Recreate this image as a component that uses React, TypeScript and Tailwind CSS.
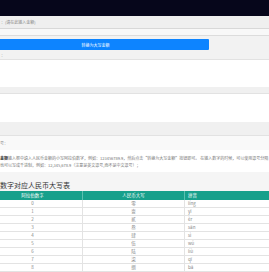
const rows = [
  { n: '0', c: '零', p: 'líng' },
  { n: '1', c: '壹', p: 'yī' },
  { n: '2', c: '贰', p: 'èr' },
  { n: '3', c: '叁', p: 'sān' },
  { n: '4', c: '肆', p: 'sì' },
  { n: '5', c: '伍', p: 'wǔ' },
  { n: '6', c: '陆', p: 'liù' },
  { n: '7', c: '柒', p: 'qī' },
  { n: '8', c: '捌', p: 'bā' },
];

const font = { fontFamily: '"Noto Sans CJK SC", "Noto Sans", sans-serif' };

export default function App() {
  return (
    <div className="w-[269px] h-[272px] overflow-hidden bg-[#f5f5f5] text-[#888]" style={font}>
      <div className="h-[16px] bg-[#06061b]" />

      <div className="h-[13px] bg-[#efefef] border-b border-[#d8d8d8] flex items-center pl-[1px] text-[4px] leading-none">
        ：(请在此输入金额)
      </div>
      <div className="h-[7px] bg-[#f8f8f8] border-b border-[#dcdcdc]" />

      <div className="h-[24px] bg-[#f2f2f2] border-b border-[#e2e2e2] flex flex-col">
        <button className="mt-[3px] h-[11px] -ml-[18px] w-[227px] bg-[#0d84ff] rounded-[1px] text-white text-[4px] leading-none flex items-center justify-center">
          转换为大写金额
        </button>
        <div className="mt-[3px] pl-[1px] text-[4px] leading-none">：</div>
      </div>

      <div className="h-[27px] bg-white" />
      <div className="h-[7px] bg-[#f0f0f0] border-b border-[#e2e2e2]" />
      <div className="h-[28px] bg-white" />
      <div className="h-[14px] bg-[#f0f0f0] border-b border-[#e2e2e2]" />

      <div className="h-[14px] bg-[#f9f9f9] flex items-center text-[4px] leading-none">号：</div>

      <div className="h-[22px] bg-white flex flex-col justify-center gap-[3px] whitespace-nowrap text-[4px] leading-none text-[#777]">
        <div>
          <span className="font-bold text-[#333]">金额</span>
          输入框中填入人民币金额的小写阿拉伯数字，例如：123456789.9，然后点击“转换为大写金额”按钮即可。 在输入数字的时候，可以使用逗号分隔
        </div>
        <div>也可以写成千进制，例如：12,345,678.9（注意是英文逗号,而不是中文逗号）；</div>
      </div>

      <div className="h-[7px]" />
      <div className="h-[12px] text-[7px] leading-none text-[#333] flex items-center whitespace-nowrap">
        数字对应人民币大写表
      </div>

      <div className="-ml-[17px] w-[290px] text-[4.5px] leading-none">
        <div className="grid grid-cols-[100px_102px_1fr] h-[9px] bg-[#17a08b] text-white">
          <div className="flex items-center justify-center border-r border-[#5cc0b0]">阿拉伯数字</div>
          <div className="flex items-center justify-center border-r border-[#5cc0b0]">人民币大写</div>
          <div className="flex items-center pl-[3px]">拼音</div>
        </div>
        {rows.map((r) => (
          <div key={r.n} className="grid grid-cols-[100px_102px_1fr] h-[8px] bg-white border-b border-[#e3e3e3] text-[#888]">
            <div className="flex items-center justify-center border-r border-[#e3e3e3]">{r.n}</div>
            <div className="flex items-center justify-center border-r border-[#e3e3e3]">{r.c}</div>
            <div className="flex items-center pl-[3px]">{r.p}</div>
          </div>
        ))}
      </div>
    </div>
  );
}
